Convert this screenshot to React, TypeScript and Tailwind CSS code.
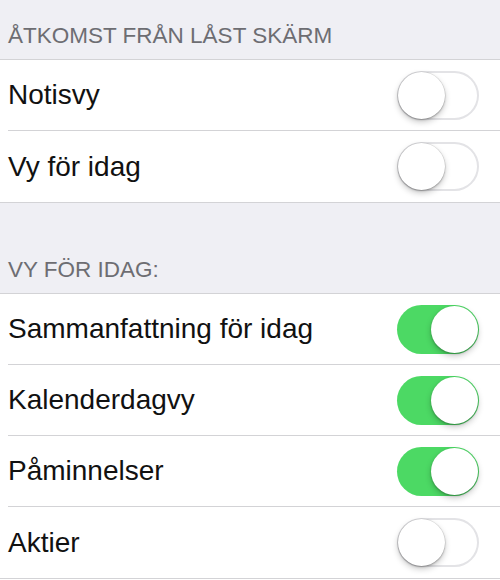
import React from "react"

type Row = { label: string; on: boolean }

const lockScreen: Row[] = [
  { label: "Notisvy", on: false },
  { label: "Vy för idag", on: false },
]

const todayView: Row[] = [
  { label: "Sammanfattning för idag", on: true },
  { label: "Kalenderdagvy", on: true },
  { label: "Påminnelser", on: true },
  { label: "Aktier", on: false },
]

function Toggle({ on }: { on: boolean }) {
  return (
    <div
      className={
        on
          ? "relative h-[49px] w-[82px] shrink-0 rounded-full bg-[#4cd964]"
          : "relative h-[49px] w-[82px] shrink-0 rounded-full bg-white shadow-[inset_0_0_0_2px_#e3e3e6]"
      }
    >
      <div
        className={
          on
            ? "absolute top-[1px] right-[1px] h-[47px] w-[47px] rounded-full bg-white shadow-[0_3px_6px_rgba(0,0,0,0.22),0_1px_2px_rgba(0,0,0,0.25)]"
            : "absolute top-[1px] left-[1px] h-[47px] w-[47px] rounded-full bg-white shadow-[0_3px_6px_rgba(0,0,0,0.22),0_1px_2px_rgba(0,0,0,0.25),0_0_0_0.5px_rgba(0,0,0,0.1)]"
        }
      />
    </div>
  )
}

function Group({ rows }: { rows: Row[] }) {
  return (
    <div className="border-t border-[#d3d3d6] bg-white">
      {rows.map((row, i) => (
        <div key={row.label} className="pl-2">
          <div
            className={
              i === rows.length - 1
                ? "flex h-[71px] items-center justify-between pr-[21px]"
                : "flex h-[71px] items-center justify-between border-b border-[#d3d3d6] pr-[21px]"
            }
          >
            <span className="text-[28px] leading-[32px] text-[#111]">{row.label}</span>
            <Toggle on={row.on} />
          </div>
        </div>
      ))}
    </div>
  )
}

export default function App() {
  return (
    <div className="h-[580px] w-[500px] overflow-hidden bg-white font-['Liberation_Sans',Arial,sans-serif]">
      <div className="flex h-[59px] items-end bg-[#efeff4] pb-[10px] pl-2">
        <span className="text-[22.5px] leading-[26px] text-[#6d6d72]">ÅTKOMST FRÅN LÅST SKÄRM</span>
      </div>
      <div className="border-b border-[#d3d3d6]">
        <Group rows={lockScreen} />
      </div>
      <div className="flex h-[90px] items-end bg-[#efeff4] pb-[10px] pl-2">
        <span className="text-[22.5px] leading-[26px] text-[#6d6d72]">VY FÖR IDAG:</span>
      </div>
      <div className="border-b border-[#d3d3d6]">
        <Group rows={todayView} />
      </div>
    </div>
  )
}
